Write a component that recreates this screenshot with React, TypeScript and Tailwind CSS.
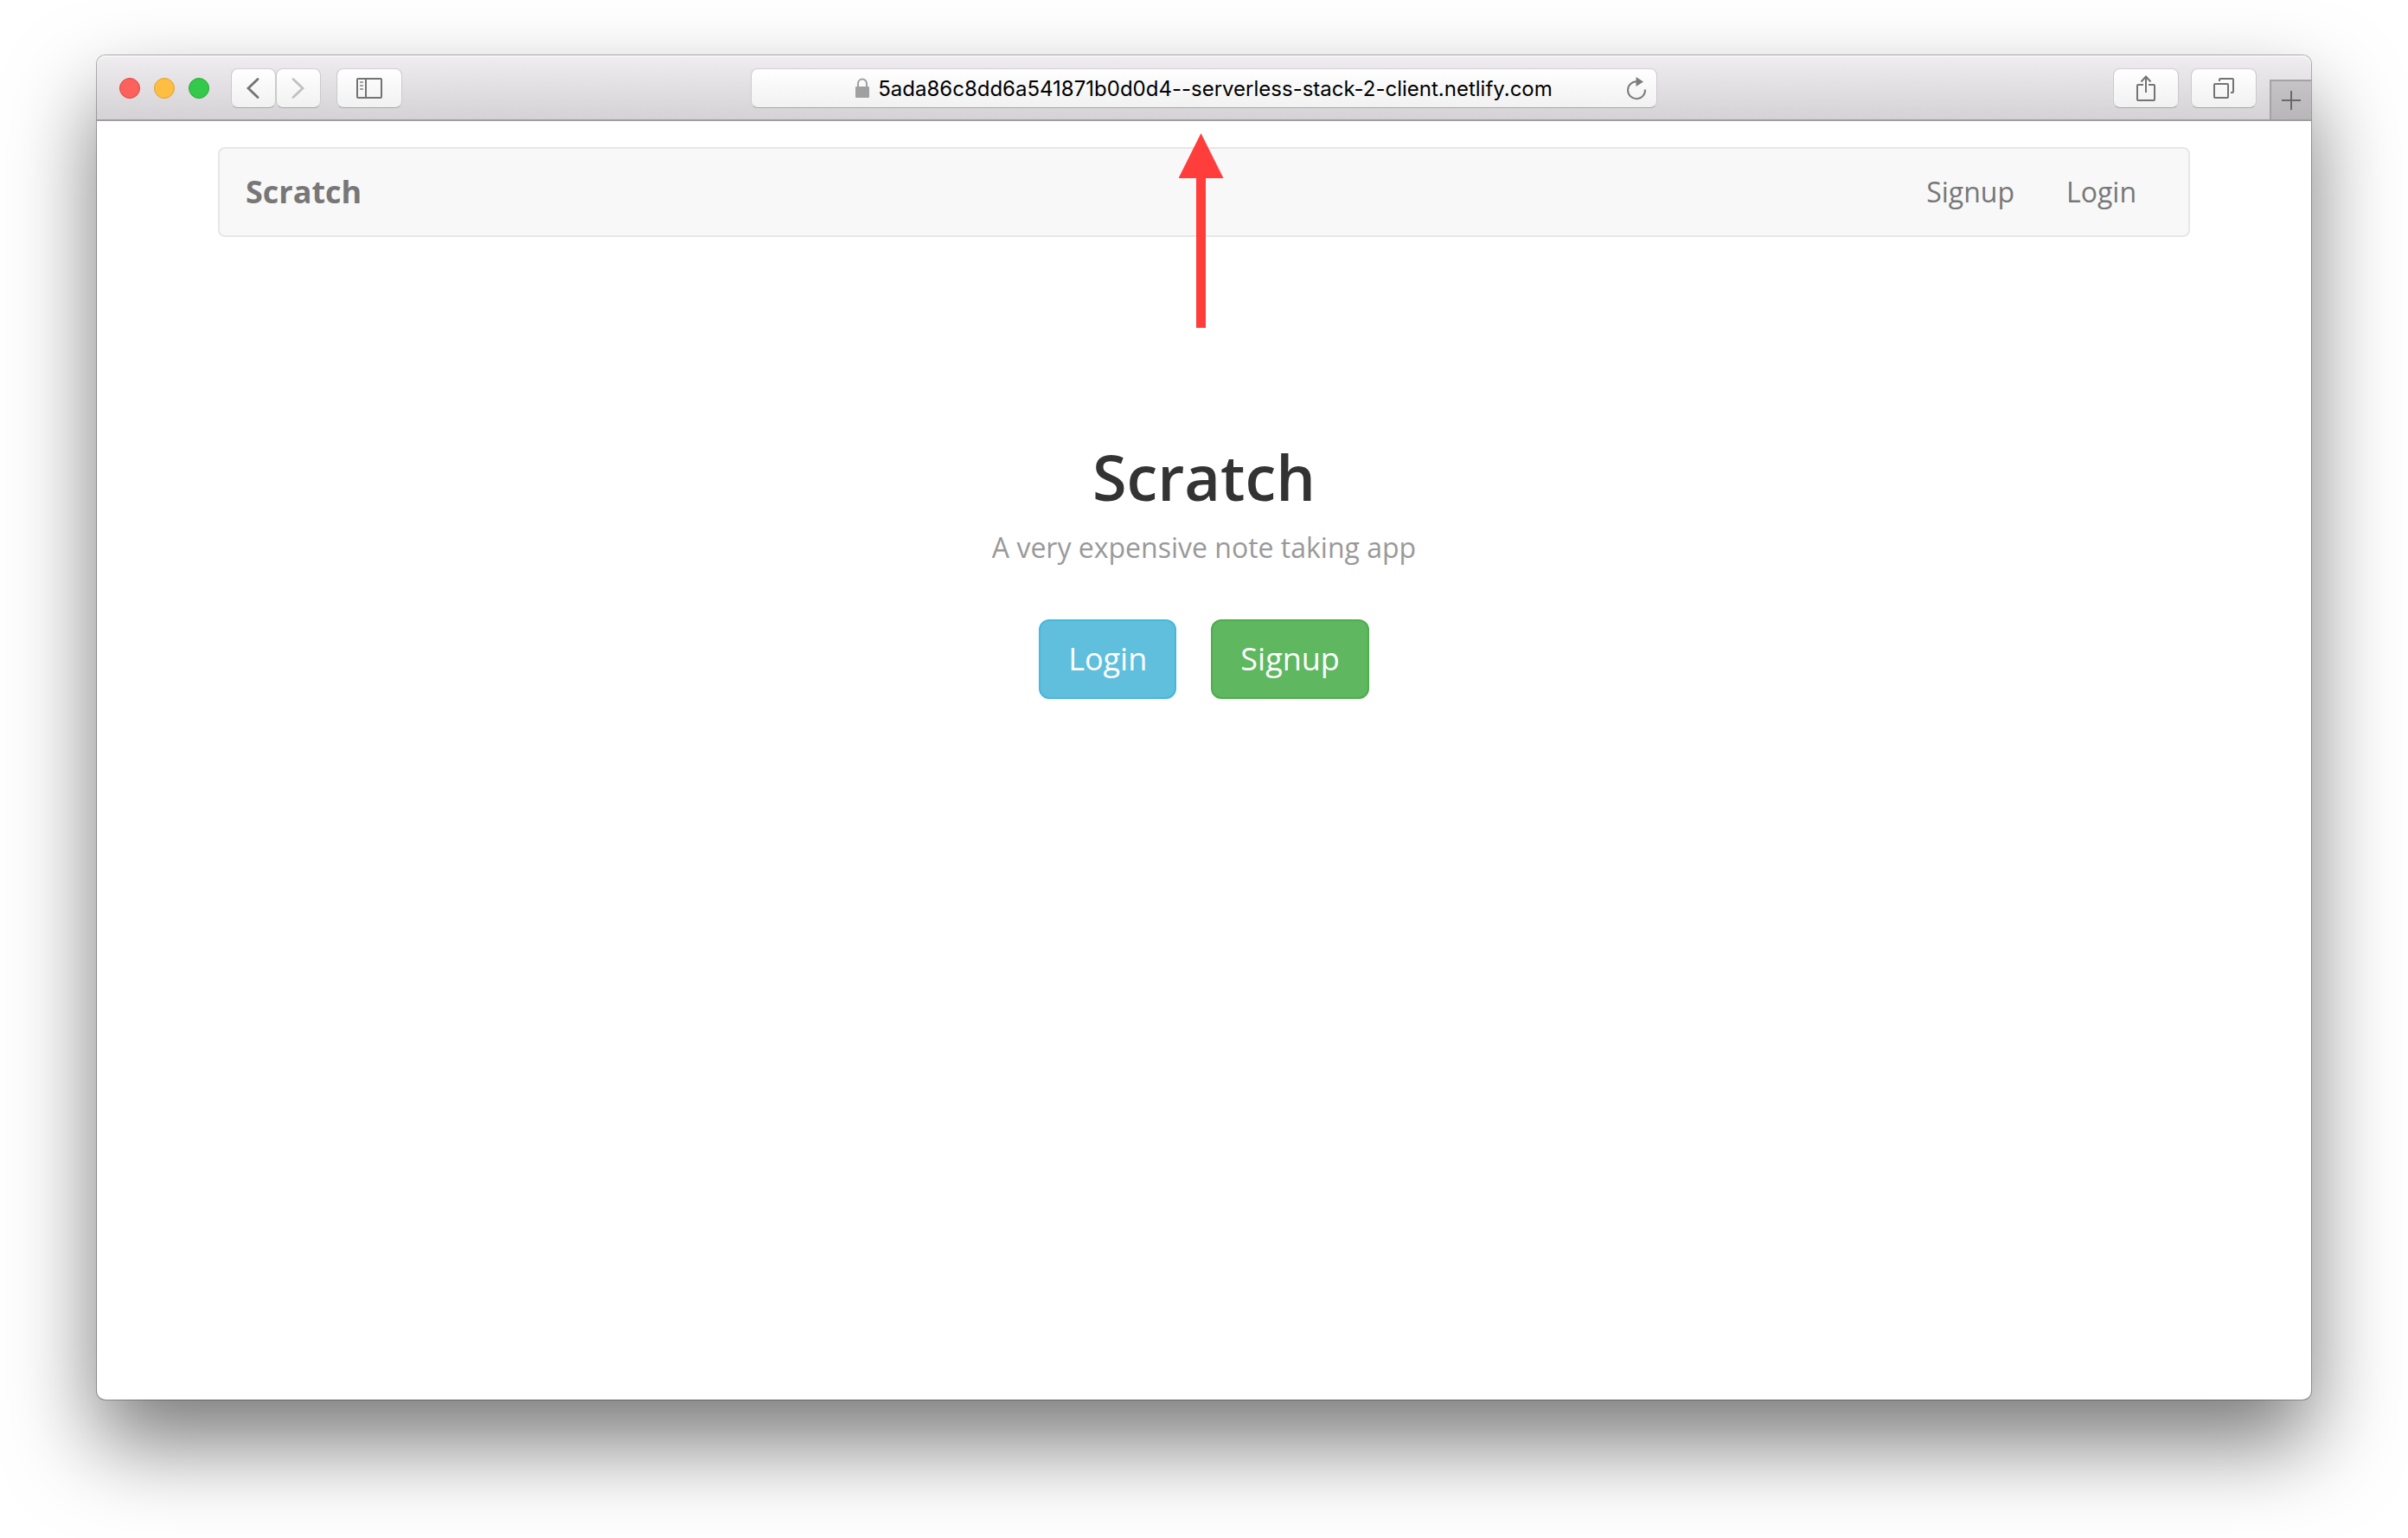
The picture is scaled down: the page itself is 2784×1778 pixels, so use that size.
import type { ReactNode } from "react";

function ToolButton({
  label,
  wide = true,
  children,
}: {
  label: string;
  wide?: boolean;
  children: ReactNode;
}) {
  return (
    <button
      type="button"
      aria-label={label}
      className={`flex h-[46px] items-center justify-center rounded-lg border border-b-[#a9a6aa] border-t-[#d2d0d3] border-x-[#cbc9cc] bg-linear-to-b from-white to-[#f1f1f1] text-[#737373] ${
        wide ? "w-[76px]" : "w-[52px]"
      }`}
    >
      {children}
    </button>
  );
}

function Toolbar() {
  return (
    <header className="grid h-[76px] grid-cols-[1fr_minmax(0,1048px)_1fr] items-center rounded-t-[10px] border-b-2 border-[#a09da2] bg-linear-to-b from-[#efedf0] to-[#d5d2d6] pt-0.5 shadow-[inset_0_2px_0_#f6f5f7]">
      <div className="flex items-center pl-[26px]">
        <div className="mr-[25px] flex gap-4">
          <button type="button" aria-label="Close" className="size-6 rounded-full border border-[#e0443f] bg-[#fd615c]" />
          <button type="button" aria-label="Minimize" className="size-6 rounded-full border border-[#dea035] bg-[#febe41]" />
          <button type="button" aria-label="Zoom" className="size-6 rounded-full border border-[#24ab38] bg-[#34c94a]" />
        </div>
        <ToolButton label="Back" wide={false}>
          <svg width="16" height="26" viewBox="0 0 16 26" fill="none" stroke="#737373" strokeWidth="2.8" strokeLinecap="round">
            <path d="M13 2.500 2 13l11 10.500" />
          </svg>
        </ToolButton>
        <ToolButton label="Forward" wide={false}>
          <svg width="16" height="26" viewBox="0 0 16 26" fill="none" stroke="#c1c1c1" strokeWidth="2.8" strokeLinecap="round">
            <path d="M2 2.500 13 13 2 23.500" />
          </svg>
        </ToolButton>
        <div className="ml-[18px]">
          <ToolButton label="Show sidebar">
            <svg width="30" height="24" viewBox="0 0 30 24" fill="none" stroke="currentColor" strokeWidth="2">
              <rect x="1" y="1" width="28" height="22" rx="1" />
              <path d="M11 1v22" />
              <path d="M4 5h4M4 9h4M4 13h4" stroke="#a0a0a0" />
            </svg>
          </ToolButton>
        </div>
      </div>

      <div className="flex h-[46px] items-center rounded-lg border border-b-[#a9a6aa] border-t-[#d2d0d3] border-x-[#cbc9cc] bg-linear-to-b from-white to-[#f1f1f1] pl-[35px] pr-[11px]">
        <div className="flex flex-1 items-center justify-center gap-[10px]">
          <svg width="16" height="24" viewBox="0 0 16 24" className="shrink-0">
            <path d="M3 11V6.500a5 5 0 0 1 10 0V11" fill="none" stroke="#a0a0a0" strokeWidth="2" />
            <rect y="10" width="16" height="13" rx="1" fill="#a0a0a0" />
          </svg>
          <input
            aria-label="Address"
            type="text"
            defaultValue="5ada86c8dd6a541871b0d0d4--serverless-stack-2-client.netlify.com"
            className="field-sizing-content min-w-0 bg-transparent pt-0.5 font-['Inter',sans-serif] text-[24px] leading-8 text-black outline-none"
          />
        </div>
        <button type="button" aria-label="Reload" className="shrink-0">
          <svg width="24" height="28" viewBox="0 0 24 28">
            <path d="M12 6.200a10 10 0 1 0 10 9.300" fill="none" stroke="#7c7c7c" strokeWidth="2" />
            <path d="M11.500 1v11L20 6.500z" fill="#7c7c7c" />
          </svg>
        </button>
      </div>

      <div className="flex h-full items-center justify-end">
        <div className="mr-[15px] flex gap-[14px]">
          <ToolButton label="Share">
            <svg width="24" height="32" viewBox="0 0 24 32" fill="none" stroke="currentColor" strokeWidth="2">
              <path d="M9 12H3a1 1 0 0 0-1 1v16a1 1 0 0 0 1 1h18a1 1 0 0 0 1-1V13a1 1 0 0 0-1-1h-6" />
              <path d="M12 21V3M6.500 8.500 12 2.500l5.500 6" />
            </svg>
          </ToolButton>
          <ToolButton label="Show all tabs">
            <svg width="24" height="24" viewBox="0 0 24 24" fill="none" stroke="currentColor" strokeWidth="2">
              <rect x="1" y="7" width="16" height="16" rx="1" />
              <path d="M7 4V2a1 1 0 0 1 1-1h14a1 1 0 0 1 1 1v14a1 1 0 0 1-1 1h-2" />
            </svg>
          </ToolButton>
        </div>
        <button
          type="button"
          aria-label="New tab"
          className="flex h-[46px] w-12 items-center justify-center self-end border-l-2 border-t-2 border-[#a5a2a6] bg-linear-to-b from-[#c6c3c7] to-[#b9b6ba]"
        >
          <svg width="22" height="22" viewBox="0 0 22 22" stroke="#6a686b" strokeWidth="2">
            <path d="M11 0v22M0 11h22" />
          </svg>
        </button>
      </div>
    </header>
  );
}

function Navbar() {
  return (
    <nav className="mx-auto flex w-full max-w-[2280px] items-center justify-between rounded-lg border-2 border-[#e7e7e7] bg-[#f8f8f8] px-[30px] py-[30px] leading-10 text-[#777]">
      <a href="#home" className="text-[36px] font-bold">
        Scratch
      </a>
      <ul className="flex gap-[60px] pr-[30px] text-[32px]">
        <li>
          <a href="#signup">Signup</a>
        </li>
        <li>
          <a href="#login">Login</a>
        </li>
      </ul>
    </nav>
  );
}

function PointerArrow() {
  return (
    <svg
      className="pointer-events-none absolute left-1/2 top-[14px] -translate-x-1/2"
      width="58"
      height="226"
      viewBox="0 0 58 226"
      fill="#ff3e3b"
      aria-hidden="true"
    >
      <path d="M25.500 0 51.500 52H31v173H20V52H-.5z" />
    </svg>
  );
}

export default function App() {
  return (
    <div className="flex min-h-screen bg-white px-28 pb-40 pt-16 font-['Open_Sans',sans-serif]">
      <div className="flex flex-1 flex-col rounded-[10px] bg-white shadow-[0_0_0_1px_rgba(0,0,0,0.28),0_50px_100px_rgba(0,0,0,0.53)]">
        <Toolbar />
        <main className="relative flex-1 px-8 pt-[30px]">
          <Navbar />
          <section className="flex flex-col items-center pt-[238px] text-center">
            <h1 className="text-[72px] font-semibold leading-[78px] text-[#333]">Scratch</h1>
            <p className="mt-5 text-[32px] leading-[46px] text-[#999]">A very expensive note taking app</p>
            <div className="mt-[60px] flex gap-10 text-[36px] leading-12 text-white">
              <a href="#login" className="rounded-xl border-2 border-[#46b8da] bg-[#5fbfdc] px-8 py-5">
                Login
              </a>
              <a href="#signup" className="rounded-xl border-2 border-[#4cae4c] bg-[#5fb760] px-8 py-5">
                Signup
              </a>
            </div>
          </section>
          <PointerArrow />
        </main>
      </div>
    </div>
  );
}
